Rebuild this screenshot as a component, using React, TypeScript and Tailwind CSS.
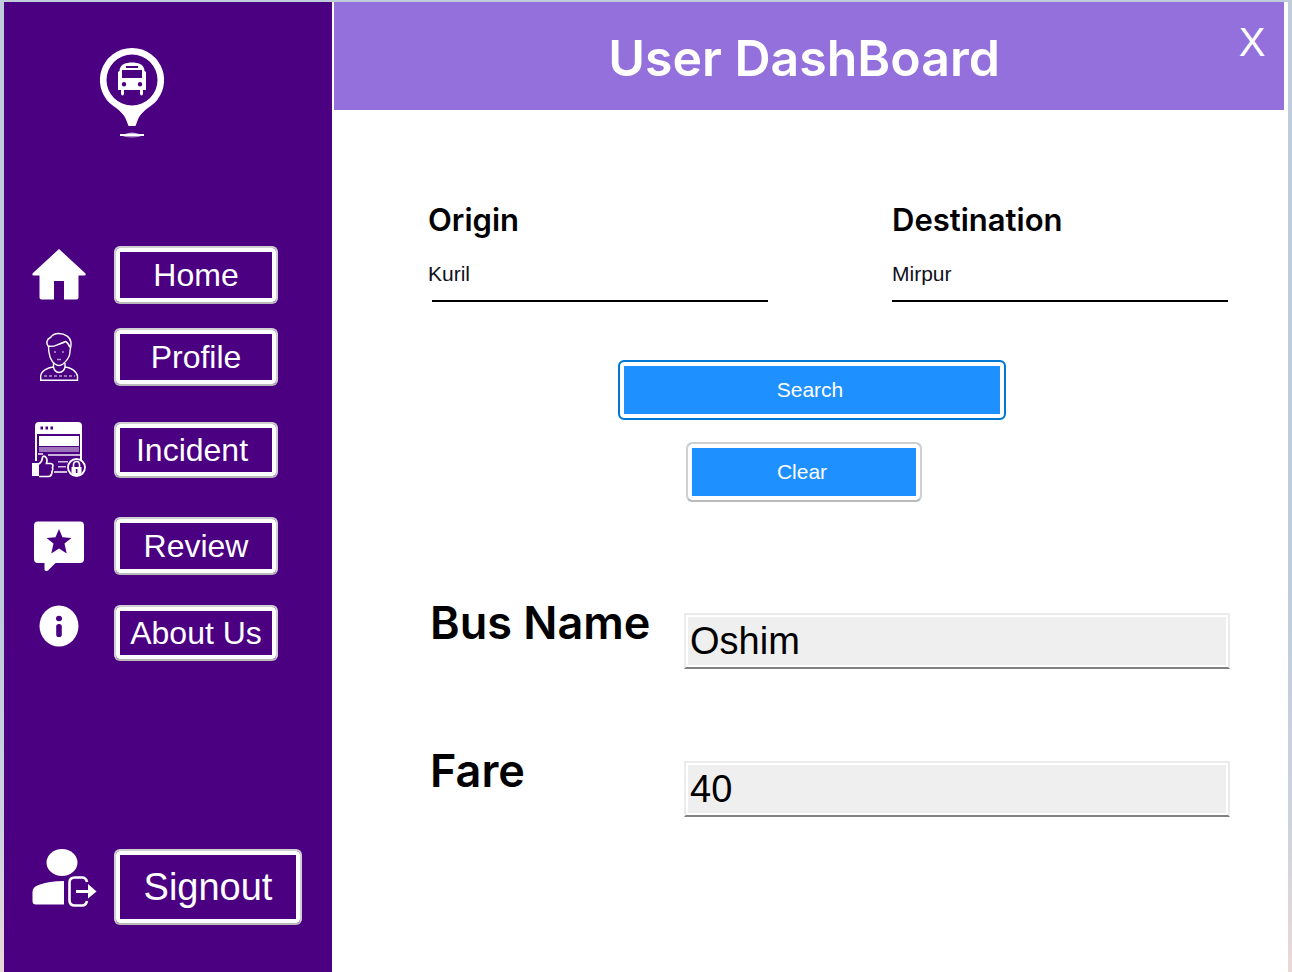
import type { ReactNode } from "react";

function BusPinLogo() {
  return (
    <svg viewBox="100 48 64 90" className="h-[90px] w-16" fill="white" aria-hidden="true">
      <path
        fillRule="evenodd"
        d="M132 48a32 32 0 0 1 18 58.500c-7 5-11 9-13 15.500l-1.500 4h-7l-1.500-4c-2-6.500-6-10.500-13-15.500A32 32 0 0 1 132 48Zm0 6.500a25.500 25.500 0 1 0 0 51 25.500 25.500 0 0 0 0-51Z"
      />
      <path
        fillRule="evenodd"
        d="M124 64c4-2 12-2 16 0q4 1.500 4.500 7l1.500 1v18h-3v4q-1.500 3-3 0v-4h-16v4q-1.500 3-3 0v-4h-3V72l1.500-1q.5-5.500 4.500-7Zm2 2v2h12v-2h-12Zm-4 4v8h20v-8h-20Zm2 12a2.200 2.200 0 1 0 0 4.400 2.200 2.200 0 0 0 0-4.400Zm16 0a2.200 2.200 0 1 0 0 4.400 2.200 2.200 0 0 0 0-4.400Z"
      />
      <path d="M120 134h24q-3 3.500-12 3.500T120 134Z" opacity=".55" />
      <rect x="120" y="134" width="24" height="2" />
      <path d="M125 134q7-3 14 0Z" opacity=".7" />
    </svg>
  );
}

function HomeIcon() {
  return (
    <svg viewBox="32 248 54 52" className="h-[52px] w-[54px]" fill="white" aria-hidden="true">
      <path d="M59 248 L85 272 Q87 274.500 84 274.500 H78.500 V296.500 Q78.500 298.500 76.500 298.500 H64 V280 H54 V298.500 H41.500 Q39.500 298.500 39.500 296.500 V274.500 H34 Q31 274.500 33 272 Z" />
    </svg>
  );
}

function ProfileIcon() {
  return (
    <svg
      viewBox="39 333 40 50"
      className="h-[50px] w-10"
      fill="none"
      stroke="white"
      strokeWidth="1.400"
      aria-hidden="true"
    >
      <path d="M48.500 347.500c-3-3-1.500-8 2-9 2-3 4.500-4 8-4 7 0 12 4 12.500 9 .5 4-1 6-1 9 0 6-4 10-7 12.500q-4 3-8 0c-4-3-6.500-9-6.500-17.500Z" />
      <path d="M48.500 347c4 1.500 8-1 11-2q4-1.500 6-2.500 3 1.500 4.500 6" />
      <path d="M53.500 364v4q1 5 5.500 5.500 5-.5 6-5.500v-4" />
      <path d="M53.500 368c-5 0-12.500 4-12.800 9v4.300h36.800V377c-1-5-7.500-9-12.500-9" />
      <path d="M44 377h31" strokeDasharray="3 2" opacity=".6" />
      <path d="M54 353h2m6 0h2M57 360.500h4" opacity=".6" />
    </svg>
  );
}

function IncidentIcon() {
  return (
    <svg viewBox="32 421 54 58" className="h-[58px] w-[54px]" fill="white" aria-hidden="true">
      <path
        fillRule="evenodd"
        d="M39 422h39q4 0 4 4v35h-2V434H37v27h-2v-35q0-4 4-4Zm1.500 4.500v3h2.500v-3h-2.500Zm5 0v3h2.500v-3h-2.500Zm5 0v3h2.500v-3h-2.500Z"
      />
      <path d="M39 436h40v10H39z" />
      <path d="M39 447h40v5H39z" opacity=".45" />
      <path d="M48 454h32v2H48zM38 453h5v2h-5z" opacity=".7" />
      <path d="M58 461h10v1.500H58zM58 466h8v1.500h-8zM54 471h13v2H54z" opacity=".75" />
      <path d="M32 463h7v13h-7z" />
      <path
        d="M39 464q3-2 3.500-6.500.5-2 2.500-1 3 2 1.500 7h4q3.500.5 2 4 1 2-.5 4 0 5-4 5H39"
        fill="none"
        stroke="white"
        strokeWidth="1.700"
      />
      <circle cx="76.500" cy="467.500" r="8.500" fill="#4b0082" stroke="white" strokeWidth="1.800" />
      <path d="M71.500 467h10v6q-2 3-5 3t-5-3Z" />
      <path d="M73.500 468v-3q0-3.500 3-3.500t3 3.500v3" fill="none" stroke="white" strokeWidth="1.600" />
      <path d="M75.800 469h1.600v4h-1.600z" fill="#4b0082" />
    </svg>
  );
}

function ReviewIcon() {
  return (
    <svg viewBox="34 521 50 51" className="h-[51px] w-[50px]" fill="white" aria-hidden="true">
      <path
        fillRule="evenodd"
        d="M38 521.500h42q4 0 4 4V559q0 4-4 4H55.500L48 570.500q-3.500 1.500-3.500-1.500v-6H38q-4 0-4-4v-33.500q0-4 4-4ZM59 529l-3.500 8.300-9 .7 7 5.600-2.200 9.900 7.700-5 7.700 5-2.200-9.900 7-5.600-9-.7Z"
      />
    </svg>
  );
}

function InfoIcon() {
  return (
    <svg viewBox="39 606 40 42" className="h-[42px] w-10" fill="white" aria-hidden="true">
      <ellipse cx="59" cy="627" rx="19.500" ry="20.500" />
      <ellipse cx="59" cy="619.500" rx="3" ry="2.800" fill="#4b0082" />
      <rect x="56.200" y="625" width="5.600" height="13" rx="2.600" fill="#4b0082" />
    </svg>
  );
}

function SignoutIcon() {
  return (
    <svg viewBox="32 849 65 60" className="h-[60px] w-[65px]" fill="white" aria-hidden="true">
      <ellipse cx="62" cy="862.500" rx="15.500" ry="13.500" />
      <path d="M64 881v23.500H36q-3.500 0-3.500-3.500v-9q0-5 6-7Q49 881 64 881Z" />
      <path
        d="M87 882q-1-4.500-5-4.500h-7q-5.500 0-5.500 5v18q0 5 5.500 5h7q4 0 5-4.500"
        fill="none"
        stroke="white"
        strokeWidth="2.600"
      />
      <path d="M76 890h12v-6l8.500 7.500-8.500 7v-5.500H76Z" />
    </svg>
  );
}

type NavItem = { label: string; icon: ReactNode; row: string; button?: string };

const items: NavItem[] = [
  { label: "Home", icon: <HomeIcon />, row: "mt-[108px] h-[58px] items-center" },
  { label: "Profile", icon: <ProfileIcon />, row: "mt-6 h-[58px] items-center" },
  { label: "Incident", icon: <IncidentIcon />, row: "mt-9 h-14 items-center", button: "pr-2" },
  { label: "Review", icon: <ReviewIcon />, row: "mt-[39px] h-[58px] items-center" },
  { label: "About Us", icon: <InfoIcon />, row: "mt-[30px] h-14 items-start" },
];

const sideButton =
  "flex items-center justify-center whitespace-nowrap rounded-[6px] border-2 border-[#d0d0d0] border-b-[#bababa] bg-[#4b0082] text-white shadow-[inset_0_0_0_4px_white]";

const actionButton =
  "flex h-[60px] items-center justify-center rounded-[6px] border-2 bg-[#1e90ff] pr-1 text-[21px] text-white shadow-[inset_0_0_0_4px_white]";

const heading = "font-['Inter','Liberation_Sans',sans-serif] font-semibold";

function Sidebar() {
  return (
    <aside className="flex w-[328px] shrink-0 flex-col bg-[#4b0082] pt-[46px]">
      <div className="flex w-64 justify-center">
        <BusPinLogo />
      </div>
      <nav className="flex flex-col">
        {items.map((item) => (
          <div key={item.label} className={`flex ${item.row}`}>
            <span className="flex w-[110px] justify-center">{item.icon}</span>
            <button type="button" className={`h-full w-[164px] text-[32px] ${sideButton} ${item.button ?? ""}`}>
              {item.label}
            </button>
          </div>
        ))}
        <div className="mt-[188px] flex items-start">
          <span className="flex w-[110px] pl-7">
            <SignoutIcon />
          </span>
          <button type="button" className={`h-[76px] w-[188px] text-[38px] ${sideButton}`}>
            Signout
          </button>
        </div>
      </nav>
    </aside>
  );
}

function PlaceField({ id, label, value, line }: { id: string; label: string; value: string; line: string }) {
  return (
    <div className="flex flex-col">
      <label htmlFor={id} className={`text-[31px] leading-9 ${heading}`}>
        {label}
      </label>
      <input
        id={id}
        defaultValue={value}
        className="mt-4 h-10 w-full bg-transparent text-[21px] text-[#101020] outline-none"
      />
      <div className={`mt-1.5 h-0.5 bg-black ${line}`} />
    </div>
  );
}

function ResultField({ id, label, value }: { id: string; label: string; value: string }) {
  return (
    <div className="flex items-end">
      <label htmlFor={id} className={`w-64 shrink-0 self-start pl-0.5 text-[45px] leading-[44px] ${heading}`}>
        {label}
      </label>
      <input
        id={id}
        readOnly
        defaultValue={value}
        className="mt-3 h-14 min-w-0 flex-1 border-2 border-[#ebebeb] border-b-[#828282] bg-[#efefef] px-1 text-[38px] text-black shadow-[inset_0_0_0_2px_white] outline-none"
      />
    </div>
  );
}

export default function App() {
  return (
    <div className="flex min-h-screen bg-linear-to-b from-[#bfccdb] from-60% via-[#cdd3dd] via-85% to-[#ead8d6] px-1 pt-0.5 font-['Liberation_Sans',Arial,sans-serif]">
      <Sidebar />
      <main className="flex min-w-0 flex-1 flex-col bg-white">
        <header className="mr-1 ml-0.5 grid h-[108px] grid-cols-[40px_1fr_50px] bg-[#9370db] text-white">
          <h1 className={`col-start-2 self-center pt-1 text-center text-[50px] leading-[60px] ${heading}`}>
            User DashBoard
          </h1>
          <button type="button" aria-label="Close" className="mt-5 h-10 w-9 text-[40px] leading-10">
            X
          </button>
        </header>
        <form className="flex flex-col pt-[92px] pr-[60px] pl-24" onSubmit={(e) => e.preventDefault()}>
          <div className="grid grid-cols-[340fr_336fr] gap-[124px]">
            <PlaceField id="origin" label="Origin" value="Kuril" line="ml-1" />
            <PlaceField id="destination" label="Destination" value="Mirpur" line="" />
          </div>
          <button type="submit" className={`mt-[58px] ml-[190px] w-[388px] border-[#0078d4] ${actionButton}`}>
            Search
          </button>
          <button
            type="button"
            className={`mt-[22px] ml-[258px] w-[236px] border-[#d0d0d0] border-b-[#bababa] ${actionButton}`}
          >
            Clear
          </button>
        </form>
        <section className="mt-[99px] flex flex-col gap-20 pr-[58px] pl-24">
          <ResultField id="bus-name" label="Bus Name" value="Oshim" />
          <ResultField id="fare" label="Fare" value="40" />
        </section>
      </main>
    </div>
  );
}
